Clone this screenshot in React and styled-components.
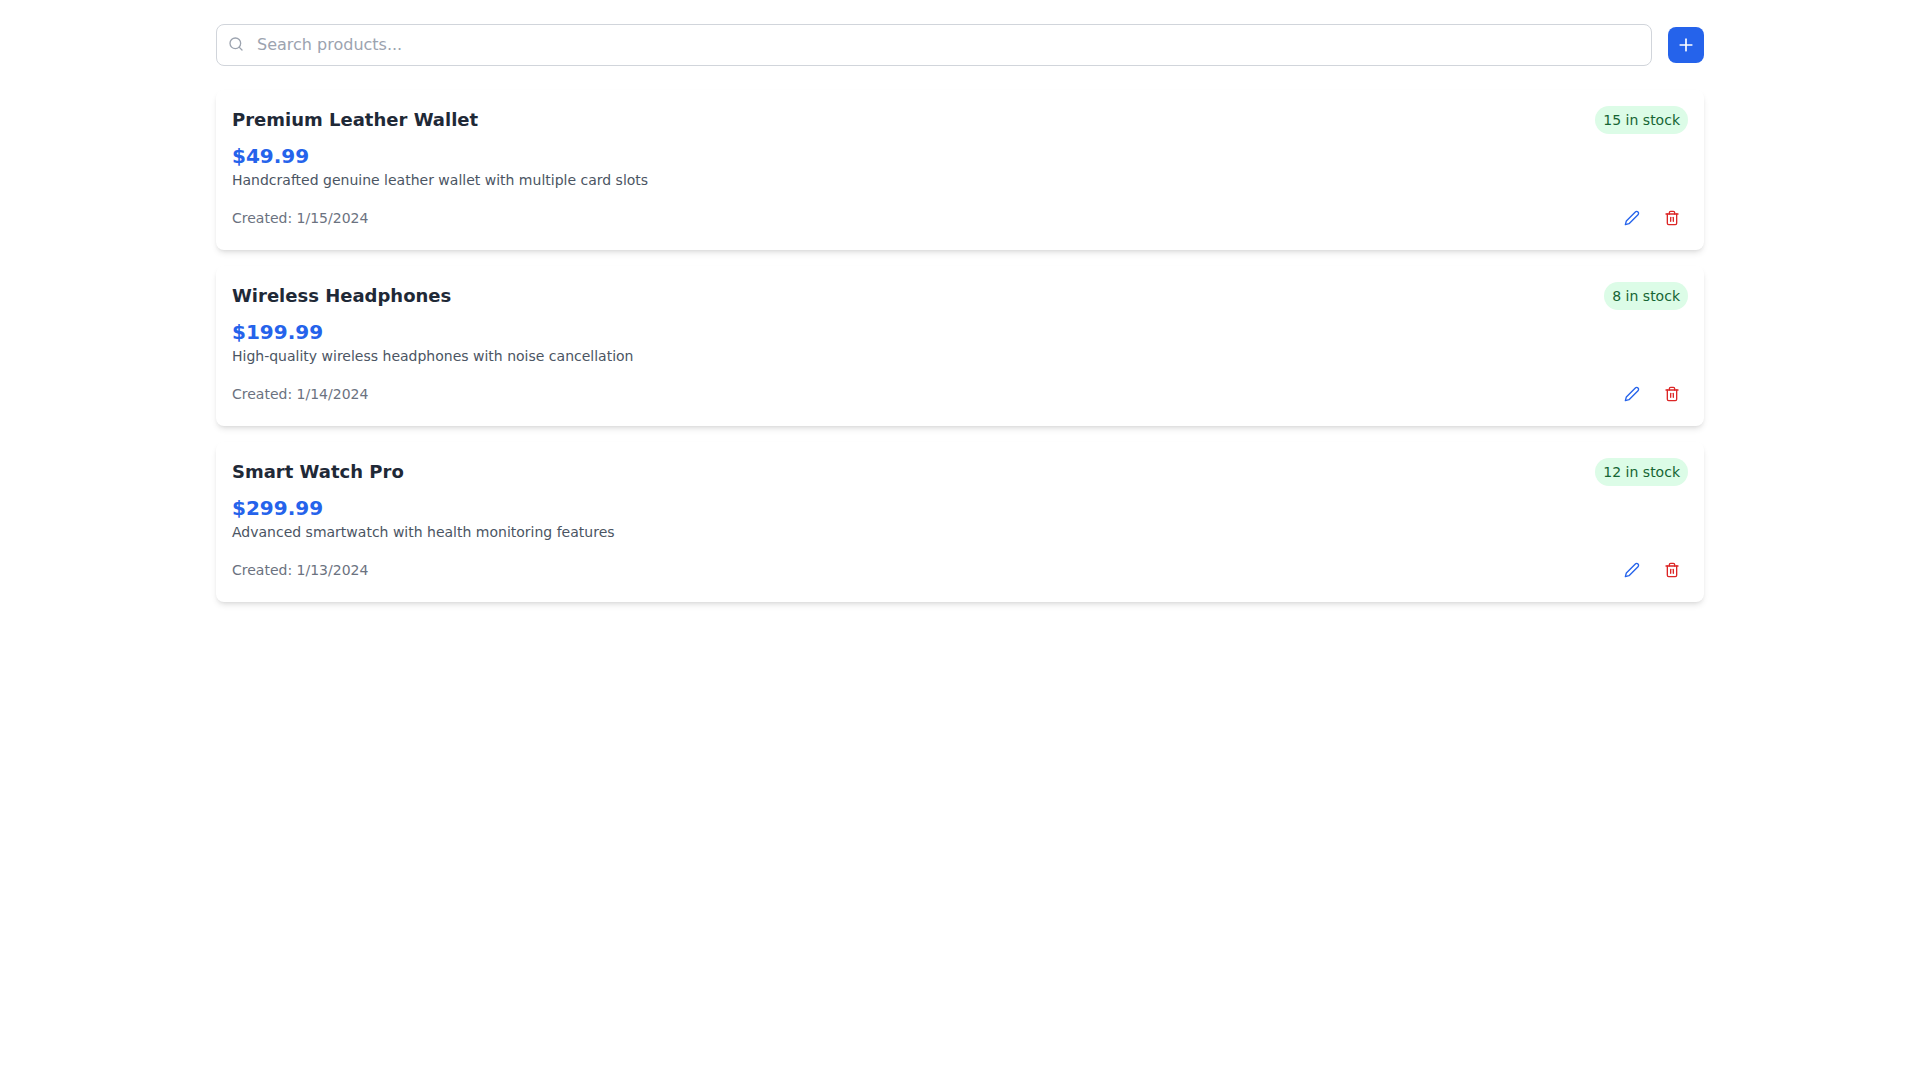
import React, { useState } from "react";
import styled, { createGlobalStyle } from "styled-components";
import { FiEdit2, FiPlus, FiSearch, FiTrash2 } from "react-icons/fi";

const initialProducts = [
  {
    id: 1,
    name: "Premium Leather Wallet",
    price: 49.99,
    description: "Handcrafted genuine leather wallet with multiple card slots",
    stock: 15,
    created: "1/15/2024",
  },
  {
    id: 2,
    name: "Wireless Headphones",
    price: 199.99,
    description: "High-quality wireless headphones with noise cancellation",
    stock: 8,
    created: "1/14/2024",
  },
  {
    id: 3,
    name: "Smart Watch Pro",
    price: 299.99,
    description: "Advanced smartwatch with health monitoring features",
    stock: 12,
    created: "1/13/2024",
  },
];

const App = () => {
  const [products, setProducts] = useState(initialProducts);
  const [query, setQuery] = useState("");

  const visible = products.filter((product) =>
    product.name.toLowerCase().includes(query.toLowerCase())
  );

  const removeProduct = (id) => {
    setProducts(products.filter((product) => product.id !== id));
  };

  return (
    <>
      <GlobalStyle />
      <Page>
        <Toolbar>
          <SearchBox>
            <SearchIcon size={16} aria-hidden="true" />
            <SearchInput
              type="text"
              aria-label="Search products"
              placeholder="Search products..."
              value={query}
              onChange={(e) => setQuery(e.target.value)}
            />
          </SearchBox>
          <AddButton type="button" aria-label="Add product">
            <FiPlus size={20} />
          </AddButton>
        </Toolbar>
        <ProductList>
          {visible.map((product) => (
            <Card key={product.id}>
              <CardRow>
                <Name>{product.name}</Name>
                <Stock>{product.stock} in stock</Stock>
              </CardRow>
              <Price>${product.price}</Price>
              <Description>{product.description}</Description>
              <CardRow>
                <Created>Created: {product.created}</Created>
                <Actions>
                  <IconButton
                    type="button"
                    $color="#2563eb"
                    aria-label={`Edit ${product.name}`}
                  >
                    <FiEdit2 size={16} />
                  </IconButton>
                  <IconButton
                    type="button"
                    $color="#dc2626"
                    aria-label={`Delete ${product.name}`}
                    onClick={() => removeProduct(product.id)}
                  >
                    <FiTrash2 size={16} />
                  </IconButton>
                </Actions>
              </CardRow>
            </Card>
          ))}
        </ProductList>
      </Page>
    </>
  );
};

export default App;

const GlobalStyle = createGlobalStyle`
  * {
    box-sizing: border-box;
    margin: 0;
    padding: 0;
  }

  body {
    background: #fff;
    font-family: "DejaVu Sans", sans-serif;
    font-size: 16px;
    line-height: 24px;
  }
`;

const Page = styled.main`
  max-width: 1536px;
  margin: 0 auto;
  padding: 24px;
`;

const Toolbar = styled.div`
  display: flex;
  align-items: center;
  gap: 16px;
  margin-bottom: 24px;
`;

const SearchBox = styled.div`
  position: relative;
  flex: 1;
`;

/* sits over the left padding of the input */
const SearchIcon = styled(FiSearch)`
  position: absolute;
  top: 12px;
  left: 12px;
  color: #9ca3af;
  pointer-events: none;
`;

const SearchInput = styled.input`
  display: block;
  width: 100%;
  padding: 8px 16px 8px 40px;
  border: 1px solid #d1d5db;
  border-radius: 8px;
  background: transparent;
  font: inherit;
  color: #1f2937;

  &::placeholder {
    color: #9ca3af;
  }
`;

const AddButton = styled.button`
  display: flex;
  padding: 8px;
  border: none;
  border-radius: 8px;
  background: #2563eb;
  color: #fff;
  cursor: pointer;
`;

const ProductList = styled.ul`
  display: flex;
  flex-direction: column;
  gap: 16px;
  list-style: none;
`;

const Card = styled.li`
  padding: 16px;
  border-radius: 8px;
  background: #fff;
  box-shadow: 0 4px 6px -1px rgba(0, 0, 0, 0.1),
    0 2px 4px -2px rgba(0, 0, 0, 0.1);
`;

const CardRow = styled.div`
  display: flex;
  align-items: center;
  justify-content: space-between;
`;

const Name = styled.h2`
  font-size: 18px;
  line-height: 28px;
  font-weight: 700;
  color: #1f2937;
`;

const Stock = styled.span`
  padding: 4px 8px;
  border-radius: 14px;
  background: #dcfce7;
  color: #166534;
  font-size: 14px;
  line-height: 20px;
`;

const Price = styled.p`
  margin-top: 8px;
  font-size: 20px;
  line-height: 28px;
  font-weight: 700;
  color: #2563eb;
`;

const Description = styled.p`
  margin-bottom: 12px;
  font-size: 14px;
  line-height: 20px;
  color: #4b5563;
`;

const Created = styled.span`
  font-size: 14px;
  line-height: 20px;
  color: #6b7280;
`;

const Actions = styled.div`
  display: flex;
  gap: 8px;
`;

const IconButton = styled.button`
  display: flex;
  padding: 8px;
  border: none;
  border-radius: 8px;
  background: transparent;
  color: ${(props) => props.$color};
  cursor: pointer;
`;
